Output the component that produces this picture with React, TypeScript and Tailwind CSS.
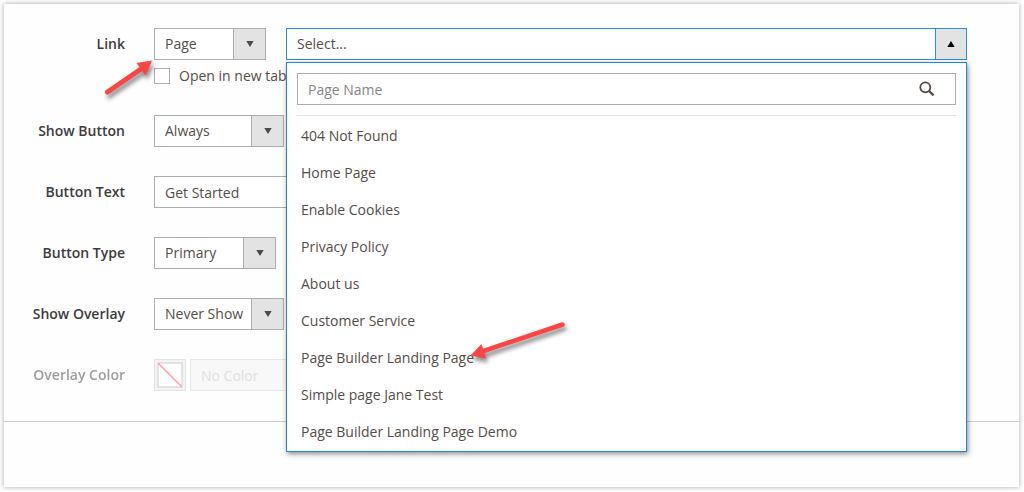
import React, { FC, ReactNode, useState } from 'react';

const pages = [
  '404 Not Found',
  'Home Page',
  'Enable Cookies',
  'Privacy Policy',
  'About us',
  'Customer Service',
  'Page Builder Landing Page',
  'Simple page Jane Test',
  'Page Builder Landing Page Demo',
];

type FieldProps = {
  label: string;
  htmlFor: string;
  disabled?: boolean;
  children: ReactNode;
};

const Field: FC<FieldProps> = ({ label, htmlFor, disabled, children }) => (
  <div className="flex items-start">
    <label
      htmlFor={htmlFor}
      className={`w-[121px] shrink-0 text-right font-semibold leading-8 text-[#3c3c3c] ${
        disabled ? 'opacity-50' : ''
      }`}
    >
      {label}
    </label>
    <div className="ml-[29px] min-w-0 grow">{children}</div>
  </div>
);

type SelectProps = {
  id: string;
  options: string[];
  className: string;
};

const Select: FC<SelectProps> = ({ id, options, className }) => (
  <div className={`relative shrink-0 ${className}`}>
    <select
      id={id}
      defaultValue={options[0]}
      className="h-8 w-full appearance-none border border-[#adadad] bg-white pl-[10px] pr-8 text-[#564d47]"
    >
      {options.map((option) => (
        <option key={option}>{option}</option>
      ))}
    </select>
    <span className="pointer-events-none absolute inset-y-0 right-0 flex w-[33px] items-center justify-center border border-[#adadad] bg-[#e3e3e3]">
      <svg width="8" height="6" viewBox="0 0 8 6" fill="#514943">
        <path d="M0.3 0h7.4L4 6z" />
      </svg>
    </span>
  </div>
);

const PagePicker: FC = () => {
  const [open, setOpen] = useState<boolean>(true);
  const [selected, setSelected] = useState<string>('Select...');
  const [search, setSearch] = useState<string>('');

  const choosePage = (page: string) => {
    setSelected(page);
    setOpen(false);
  };

  return (
    <div className="relative min-w-0 grow">
      <button
        type="button"
        onClick={() => setOpen(!open)}
        aria-expanded={open}
        className="flex h-8 w-full border border-[#2b8fe0] bg-white text-left"
      >
        <span className="grow pl-[10px] leading-[30px]">{selected}</span>
        <span className="flex w-[31px] items-center justify-center self-stretch border-l border-[#2b8fe0] bg-[#e3e3e3]">
          <svg width="8" height="6" viewBox="0 0 8 6" fill="#000">
            <path d="M0.3 6h7.4L4 0z" />
          </svg>
        </span>
      </button>

      {/* Page List */}
      {open && (
        <div className="absolute inset-x-0 top-full z-10 mt-[2px] border border-[#1f88dd] bg-white px-[10px] pt-[10px] shadow-[1px_2px_5px_rgba(0,0,0,0.45)]">
          <div className="flex h-8 items-center border border-[#adadad] pr-5">
            <input
              type="text"
              value={search}
              onChange={(e) => setSearch(e.target.value)}
              placeholder="Page Name"
              aria-label="Page Name"
              className="h-full min-w-0 grow pl-[10px] outline-none placeholder:text-[#858585]"
            />
            <svg
              width="16"
              height="16"
              viewBox="0 0 16 16"
              fill="none"
              stroke="#514943"
            >
              <circle cx="6.3" cy="6.3" r="5" strokeWidth="1.8" />
              <path d="M10 10l4.6 4.4" strokeWidth="2.2" />
            </svg>
          </div>
          <ul className="mt-[10px] border-t border-[#e3e3e3] py-px">
            {pages
              .filter((page) => page.toLowerCase().includes(search.toLowerCase()))
              .map((page) => (
                <li key={page}>
                  <button
                    type="button"
                    onClick={() => choosePage(page)}
                    className="block h-[37px] w-full pl-1 text-left"
                  >
                    {page}
                  </button>
                </li>
              ))}
          </ul>
        </div>
      )}
    </div>
  );
};

const App: FC = () => {
  return (
    <div className="p-1 pr-[5px] font-['Open_Sans','Liberation_Sans',sans-serif] text-sm text-[#564d47]">
      <main className="relative bg-[#fefefe] shadow-[0_0_5px_rgba(0,0,0,0.35)]">
        <form className="flex flex-col gap-[29px] border-b border-[#cccccc] pb-[30px] pr-[52px] pt-6">
          <Field label="Link" htmlFor="link-type">
            <div className="flex gap-5">
              <Select
                id="link-type"
                options={['Page', 'URL', 'Product', 'Category']}
                className="w-[112px]"
              />
              <PagePicker />
            </div>
            <label className="mt-[6px] flex h-5 items-center gap-[9px]">
              <input
                type="checkbox"
                className="size-4 appearance-none border border-[#adadad] bg-white checked:bg-[#41362f]"
              />
              Open in new tab
            </label>
          </Field>

          <Field label="Show Button" htmlFor="show-button">
            <Select
              id="show-button"
              options={['Always', 'On Hover', 'Never Show']}
              className="w-[130px]"
            />
          </Field>

          <Field label="Button Text" htmlFor="button-text">
            <input
              id="button-text"
              type="text"
              defaultValue="Get Started"
              className="h-8 w-1/2 border border-[#adadad] bg-white px-[10px]"
            />
          </Field>

          <Field label="Button Type" htmlFor="button-type">
            <Select
              id="button-type"
              options={['Primary', 'Secondary', 'Link']}
              className="w-[122px]"
            />
          </Field>

          <Field label="Show Overlay" htmlFor="show-overlay">
            <Select
              id="show-overlay"
              options={['Never Show', 'Always', 'On Hover']}
              className="w-[130px]"
            />
          </Field>

          <Field label="Overlay Color" htmlFor="overlay-color" disabled>
            <div className="flex gap-1">
              <button
                type="button"
                disabled
                aria-label="Overlay color swatch"
                className="flex size-8 shrink-0 items-center justify-center border border-[#e3e3e3] bg-[#f4f4f4]"
              >
                <svg width="26" height="26" viewBox="0 0 26 26">
                  <rect x="1" y="1" width="24" height="24" fill="#fff" stroke="#dadada" strokeWidth="1.5" />
                  <path d="M1.5 1.5l23 23" stroke="#ff9c9c" strokeWidth="1.5" />
                </svg>
              </button>
              <input
                id="overlay-color"
                type="text"
                disabled
                placeholder="No Color"
                className="h-8 w-1/2 border border-[#e8e8e8] bg-[#f8f8f8] px-[10px] placeholder:text-[#e0e0e0]"
              />
            </div>
          </Field>
        </form>
        <div className="h-[65px]" />

        {/* Callout Arrows */}
        <svg
          width="60"
          height="50"
          viewBox="0 0 60 50"
          className="pointer-events-none absolute left-[96px] top-[46px] z-20 drop-shadow-[2px_4px_2px_rgba(0,0,0,0.45)]"
        >
          <path d="M7.5 42L41 19" stroke="#fb4444" strokeWidth="5" strokeLinecap="round" />
          <path d="M52 10.5L36.5 13L45.5 25.5z" fill="#fb4444" />
        </svg>
        <svg
          width="110"
          height="55"
          viewBox="0 0 110 55"
          className="pointer-events-none absolute left-[460px] top-[310px] z-20 drop-shadow-[2px_4px_2px_rgba(0,0,0,0.45)]"
        >
          <path d="M98.5 10.5L18 37.5" stroke="#fb4444" strokeWidth="4.5" strokeLinecap="round" />
          <path d="M6.5 41.5L17.5 30L22 44.5z" fill="#fb4444" />
        </svg>
      </main>
    </div>
  );
};

export default App;
